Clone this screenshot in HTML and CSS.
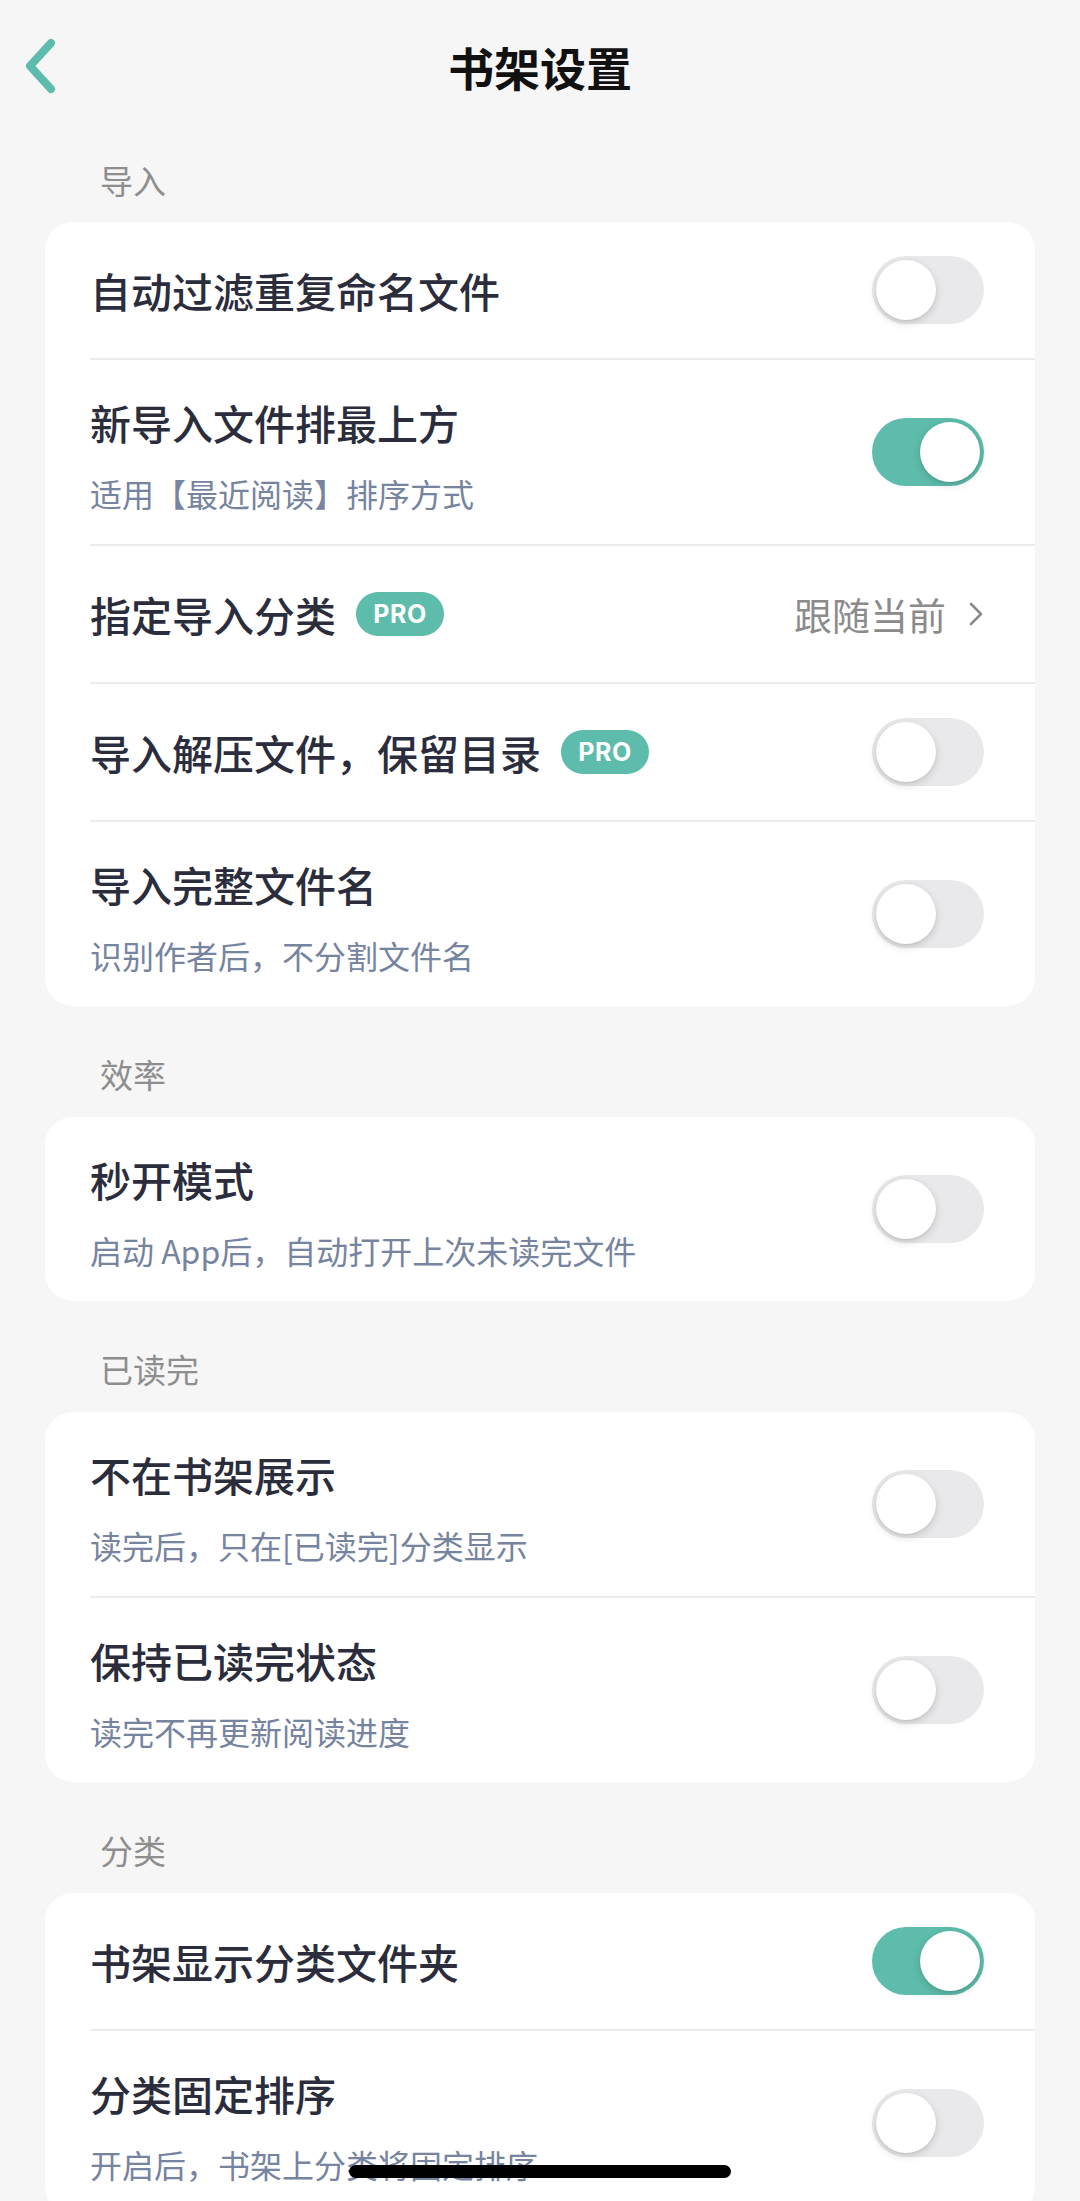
FILE: index.html
```html
<!DOCTYPE html>
<html lang="zh-CN">
<head>
<meta charset="UTF-8" />
<meta name="viewport" content="width=device-width, initial-scale=1" />
<title>书架设置</title>
<link rel="stylesheet" href="styles.css">
</head>
<body>

<header class="nav-bar">
  <a class="back" href="#" aria-label="返回">
    <svg width="40" height="56" viewBox="0 0 40 56">
      <path d="M31 5 L10 28 L31 51" fill="none" stroke="#5dbcab" stroke-width="8" stroke-linecap="round" stroke-linejoin="round"/>
    </svg>
  </a>
  <h1>书架设置</h1>
  <span></span>
</header>

<main class="page">
  <h3 class="section-title first">导入</h3>
  <div class="card">
    <div class="row">
      <div class="row-text">
        <div class="row-title">自动过滤重复命名文件</div>
      </div>
      <label class="switch"><input type="checkbox"><span class="slider"></span></label>
    </div>
    <div class="row">
      <div class="row-text two">
        <div class="row-title">新导入文件排最上方</div>
        <div class="row-sub">适用【最近阅读】排序方式</div>
      </div>
      <label class="switch"><input type="checkbox" checked><span class="slider"></span></label>
    </div>
    <div class="row">
      <div class="row-text">
        <div class="row-title">指定导入分类 <span class="pro">PRO</span></div>
      </div>
      <a class="row-value" href="#">跟随当前
        <svg width="16" height="26" viewBox="0 0 16 26">
          <path d="M3 3 L13 13 L3 23" fill="none" stroke="#8b8b8b" stroke-width="2.6" stroke-linecap="round" stroke-linejoin="round"/>
        </svg>
      </a>
    </div>
    <div class="row">
      <div class="row-text">
        <div class="row-title">导入解压文件，保留目录 <span class="pro">PRO</span></div>
      </div>
      <label class="switch"><input type="checkbox"><span class="slider"></span></label>
    </div>
    <div class="row">
      <div class="row-text two">
        <div class="row-title">导入完整文件名</div>
        <div class="row-sub">识别作者后，不分割文件名</div>
      </div>
      <label class="switch"><input type="checkbox"><span class="slider"></span></label>
    </div>
  </div>

  <h3 class="section-title">效率</h3>
  <div class="card">
    <div class="row">
      <div class="row-text two">
        <div class="row-title">秒开模式</div>
        <div class="row-sub">启动 App后，自动打开上次未读完文件</div>
      </div>
      <label class="switch"><input type="checkbox"><span class="slider"></span></label>
    </div>
  </div>

  <h3 class="section-title">已读完</h3>
  <div class="card">
    <div class="row">
      <div class="row-text two">
        <div class="row-title">不在书架展示</div>
        <div class="row-sub">读完后，只在[已读完]分类显示</div>
      </div>
      <label class="switch"><input type="checkbox"><span class="slider"></span></label>
    </div>
    <div class="row">
      <div class="row-text two">
        <div class="row-title">保持已读完状态</div>
        <div class="row-sub">读完不再更新阅读进度</div>
      </div>
      <label class="switch"><input type="checkbox"><span class="slider"></span></label>
    </div>
  </div>

  <h3 class="section-title">分类</h3>
  <div class="card">
    <div class="row">
      <div class="row-text">
        <div class="row-title">书架显示分类文件夹</div>
      </div>
      <label class="switch"><input type="checkbox" checked><span class="slider"></span></label>
    </div>
    <div class="row">
      <div class="row-text two">
        <div class="row-title">分类固定排序</div>
        <div class="row-sub">开启后，书架上分类将固定排序</div>
      </div>
      <label class="switch"><input type="checkbox"><span class="slider"></span></label>
    </div>
  </div>
</main>

<div class="home-indicator"></div>

</body>
</html>
```

FILE: styles.css
```css
html, body {
  height: 100%;
  overflow: hidden;
}
body {
  margin: 0;
  background: #f6f6f6;
  font-family: "Noto Sans CJK SC", "Noto Sans", sans-serif;
  color: #2b2d3c;
}
.nav-bar {
  display: grid;
  grid-template-columns: 1fr auto 1fr;
  align-items: center;
  height: 132px;
}
.back {
  display: flex;
  padding-left: 20px;
}
.nav-bar h1 {
  margin: 0;
  font-size: 46px;
  line-height: 60px;
  font-weight: 700;
  color: #111;
}
.page {
  padding: 0 45px;
}
.section-title {
  margin: 0;
  padding: 45px 0 20px 55px;
  font-size: 33px;
  line-height: 46px;
  font-weight: 400;
  color: #8e8e8e;
}
.section-title.first {
  padding-top: 25px;
  padding-bottom: 19px;
}
.card {
  background: #fff;
  border-radius: 28px;
  padding-left: 45px;
}
.row {
  display: flex;
  align-items: center;
  justify-content: space-between;
  min-height: 136px;
  padding-right: 51px;
}
.row + .row {
  border-top: 2px solid #ececec;
}
.row-text.two {
  padding: 37px 0 29px;
}
.row-title {
  display: flex;
  align-items: center;
  font-size: 41px;
  line-height: 50px;
  font-weight: 500;
  color: #2b2d3c;
}
.row-sub {
  margin-top: 24px;
  font-size: 32px;
  line-height: 44px;
  color: #7684a0;
}
.pro {
  display: inline-flex;
  align-items: center;
  justify-content: center;
  width: 88px;
  height: 44px;
  margin-left: 20px;
  border-radius: 22px;
  background: #5dbcab;
  color: #fff;
  font-family: Inter, "Noto Sans", sans-serif;
  font-size: 25px;
  font-weight: 700;
  letter-spacing: 0.5px;
}
.row-value {
  display: flex;
  align-items: center;
  gap: 22px;
  font-size: 38px;
  line-height: 50px;
  color: #8b8b8b;
  text-decoration: none;
}
.switch {
  position: relative;
  display: inline-block;
  width: 112px;
  height: 68px;
  flex-shrink: 0;
}
.switch input {
  opacity: 0;
  width: 0;
  height: 0;
}
.slider {
  position: absolute;
  inset: 0;
  background: #e9e9eb;
  border-radius: 34px;
  cursor: pointer;
}
.slider::before {
  content: "";
  position: absolute;
  top: 4px;
  left: 4px;
  width: 60px;
  height: 60px;
  border-radius: 50%;
  background: #fff;
  box-shadow: 0 3px 8px rgba(0,0,0,0.15), 0 1px 2px rgba(0,0,0,0.08);
}
.switch input:checked + .slider {
  background: #5dbcab;
}
.switch input:checked + .slider::before {
  left: 48px;
}
.home-indicator {
  position: fixed;
  left: 50%;
  bottom: 23px;
  width: 382px;
  height: 13px;
  margin-left: -191px;
  border-radius: 7px;
  background: #000;
}
```
